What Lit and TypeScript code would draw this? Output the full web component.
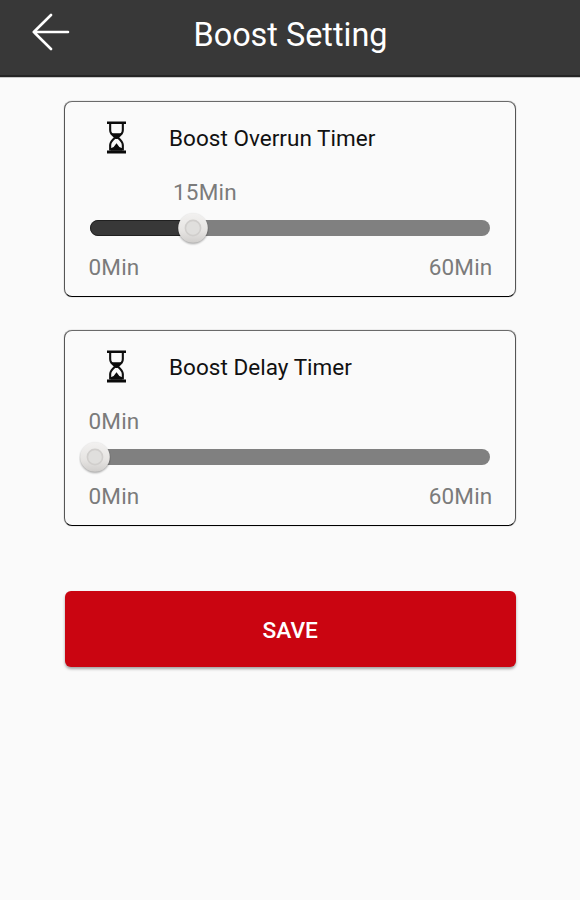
import { LitElement, html, css } from "lit";
import { customElement, property } from "lit/decorators.js";

@customElement("timer-card")
class TimerCard extends LitElement {
  @property() label = "";
  @property({ type: Number }) value = 0;
  @property({ type: Number }) max = 60;

  static styles = css`
    :host {
      display: block;
      box-sizing: border-box;
      height: 196px;
      padding: 0 23px;
      border: 1px solid #555;
      border-top-color: #6a6a6a;
      border-bottom-color: #000;
      border-radius: 8px;
      box-shadow: 0 0 1px rgba(0, 0, 0, 0.55);
      font-size: 22.5px;
      color: #7b7b7b;
    }
    .head {
      display: flex;
      align-items: center;
      height: 70px;
      padding: 2px 0 0 19px;
      box-sizing: border-box;
      color: #111;
    }
    .icon { width: 19px; height: 33px; margin: -2px 43px 0 0; display: block; }
    .text { display: block; line-height: 26px; white-space: nowrap; letter-spacing: 0.03px; }
    .value { height: 26px; line-height: 26px; margin-top: 7px; margin-left: 0.5px; letter-spacing: 0.2px; white-space: nowrap; }
    .slider { position: relative; height: 16px; margin: 15px 2px 0 2px; border-radius: 8px; background: #808080; }
    .fill { height: 16px; box-sizing: border-box; border-radius: 8px 0 0 8px; background: #383838; border: 1px solid #202020; }
    .thumb { position: absolute; top: -8px; width: 32px; height: 34px; margin-left: -16px; }
    .range { display: flex; justify-content: space-between; line-height: 26px; margin: 18px -0.5px 0 0.5px; letter-spacing: 0.2px; }
  `;

  render() {
    const ratio = this.value / this.max;
    const x = 5 + ratio * 392;
    return html`
      <div class="head">
        <svg class="icon" viewBox="0 0 18 33" preserveAspectRatio="none">
          <path d="M0 0.5H18V3H0ZM0 29.5H18V32.5H0Z" fill="#0a0a0a" />
          <path d="M3 3V9C3 12 4.2 13.2 7.8 16.4C4.2 19.6 3 21.5 3 24V29.5M15 3V9C15 12 13.8 13.2 10.2 16.4C13.8 19.6 15 21.5 15 24V29.5" fill="none" stroke="#111" stroke-width="2" />
          <path d="M4 12.2H14L10.8 16.4L10 18H8L7.2 16.4ZM3.6 29.8V27.3L6.3 26L9 22.3L11.7 26L14.4 27.3V29.8Z" fill="#0a0a0a" />
        </svg>
        <span class="text">${this.label}</span>
      </div>
      <div class="value" style="padding-left:${ratio * 338}px">${this.value}Min</div>
      <div class="slider">
        ${this.value > 0 ? html`<div class="fill" style="width:${x}px"></div>` : ""}
        <svg class="thumb" style="left:${x}px" viewBox="0 0 32 34">
          <defs>
            <linearGradient id="face" x1="0" y1="0" x2="0" y2="1">
              <stop offset="0" stop-color="#f2f1f0" /><stop offset="0.6" stop-color="#e6e4e2" /><stop offset="1" stop-color="#d0cecc" />
            </linearGradient>
            <filter id="soft" x="-20%" y="-20%" width="140%" height="140%"><feGaussianBlur stdDeviation="0.9" /></filter>
          </defs>
          <circle cx="16" cy="17.2" r="14.6" fill="#000" opacity="0.4" filter="url(#soft)" />
          <circle cx="16" cy="16" r="14.8" fill="url(#face)" />
          <circle cx="16" cy="16" r="7.6" fill="#e0dfdd" stroke="#d0cecc" stroke-width="1.6" />
        </svg>
      </div>
      <div class="range"><span>0Min</span><span>${this.max}Min</span></div>
    `;
  }
}

@customElement("app-root")
class AppRoot extends LitElement {
  static styles = css`
    :host {
      display: block;
      height: 900px;
      background: #fafafa;
      font-family: Roboto, "Liberation Sans", sans-serif;
    }
    header {
      box-sizing: border-box;
      height: 77px;
      display: grid;
      grid-template-columns: 100px 1fr 100px;
      background: #383838;
      border-bottom: 2px solid #252525;
      box-shadow: 0 1px 0 #c8c8c8;
    }
    .back { width: 38px; height: 38px; margin: 13px 0 0 32px; }
    h1 {
      margin: 0;
      padding: 15px 0 0 1px;
      font-size: 32.4px;
      line-height: 40px;
      font-weight: 400;
      color: #fff;
      text-align: center;
      white-space: nowrap;
    }
    main { display: flex; flex-direction: column; padding: 24px 64px 0; }
    timer-card { margin-bottom: 33px; }
    button {
      height: 76px;
      margin: 32px 0 0 0.5px;
      padding: 4px 0 0;
      border: 0;
      border-radius: 6px;
      background: #ca0511;
      box-shadow: 0 2px 3px rgba(0, 0, 0, 0.35);
      color: #fff;
      font: 500 22.7px/26px Roboto, "Liberation Sans", sans-serif;
    }
  `;

  render() {
    return html`
      <header>
        <svg class="back" viewBox="0 0 38 38">
          <path d="M19 2L1.8 19L19 36M1.8 19H36" fill="none" stroke="#fff" stroke-width="2.6" stroke-linecap="round" stroke-linejoin="round" />
        </svg>
        <h1>Boost Setting</h1>
      </header>
      <main>
        <timer-card label="Boost Overrun Timer" .value=${15}></timer-card>
        <timer-card label="Boost Delay Timer" .value=${0}></timer-card>
        <button>SAVE</button>
      </main>
    `;
  }
}
